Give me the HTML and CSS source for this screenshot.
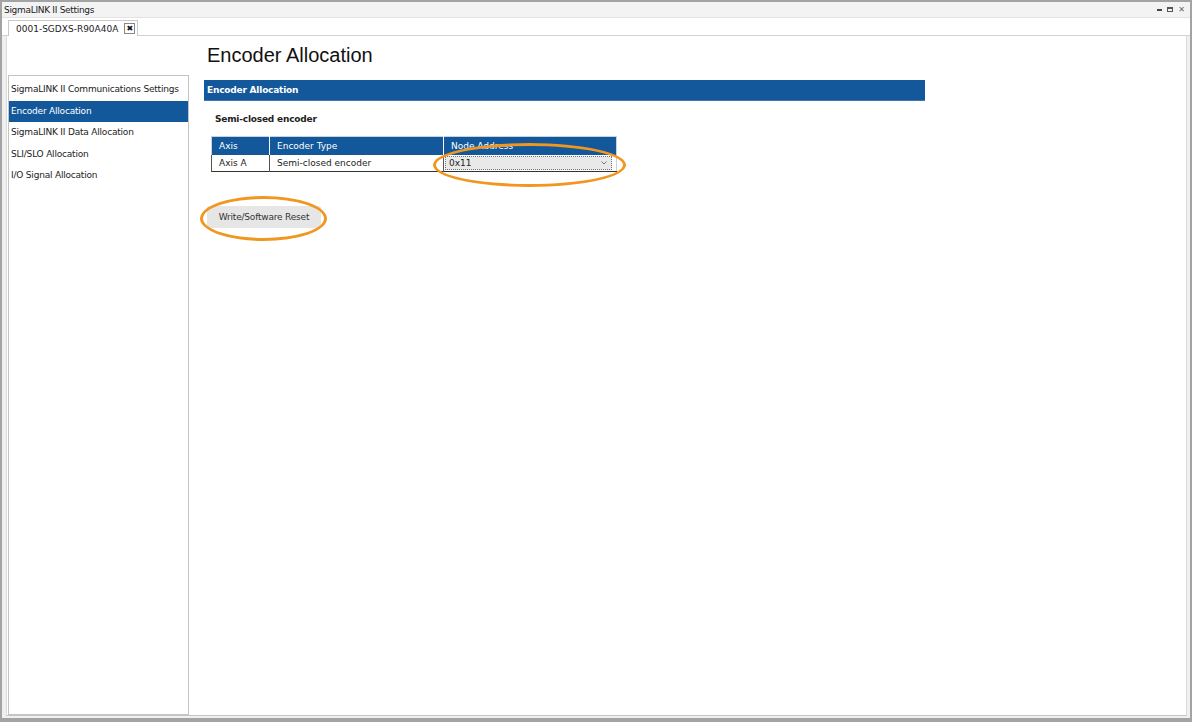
FILE: index.html
```html
<!DOCTYPE html>
<html>
<head>
  <title>SigmaLINK II Settings</title>
  <link rel="stylesheet" href="styles.css">
</head>
<body>
  <div class="window">
    <div class="titlebar">
      <span class="title">SigmaLINK II Settings</span>
      <div class="win-controls">
        <span class="ctl-pin"></span>
        <span class="ctl-max"></span>
        <span class="ctl-close">&#x2715;</span>
      </div>
    </div>
    <div class="tabstrip">
      <div class="tab">
        <span>0001-SGDXS-R90A40A</span>
        <span class="tab-close">&#x2716;</span>
      </div>
    </div>
    <div class="panel">
      <ul class="sidebar">
        <li>SigmaLINK II Communications Settings</li>
        <li class="active">Encoder Allocation</li>
        <li>SigmaLINK II Data Allocation</li>
        <li>SLI/SLO Allocation</li>
        <li>I/O Signal Allocation</li>
      </ul>
      <div class="main">
        <h1>Encoder Allocation</h1>
        <div class="section-bar">Encoder Allocation</div>
        <h4>Semi-closed encoder</h4>
        <table class="enc-table">
          <thead>
            <tr>
              <th class="col-axis">Axis</th>
              <th class="col-type">Encoder Type</th>
              <th class="col-node">Node Address</th>
            </tr>
          </thead>
          <tbody>
            <tr>
              <td>Axis A</td>
              <td>Semi-closed encoder</td>
              <td class="cell-select">
                <div class="select">
                  <span>0x11</span>
                  <svg class="arrow" width="6" height="4" viewBox="0 0 6 4">
                    <path d="M0.5 0.5 L3 3 L5.5 0.5" fill="none" stroke="#777" stroke-width="1"/>
                  </svg>
                </div>
              </td>
            </tr>
          </tbody>
        </table>
        <button class="reset-button">Write/Software Reset</button>
      </div>
    </div>
  </div>

  <div class="mark mark-select"></div>
  <div class="mark mark-button"></div>
</body>
</html>
```

FILE: styles.css
```css
body {
  margin: 0;
  padding: 0;
  position: relative;
  background: #fff;
  font-family: "DejaVu Sans", Verdana, sans-serif;
  font-size: 9px;
  color: #222;
}

.window {
  box-sizing: border-box;
  height: 722px;
  border: 2px solid #a3a3a3;
  border-bottom-width: 4px;
  background: #f0f0f0;
  display: flex;
  flex-direction: column;
}

.titlebar {
  height: 15px;
  display: flex;
  align-items: center;
  justify-content: space-between;
  padding: 0 5px 0 2px;
  border-bottom: 1px solid #e2e2e2;
  background: #f3f3f3;
}

.title {
  font-size: 9px;
  letter-spacing: -0.3px;
}

.win-controls {
  display: flex;
  align-items: center;
  gap: 5px;
  color: #555;
}

.ctl-pin {
  width: 5px;
  height: 2px;
  background: #444;
}

.ctl-max {
  width: 6px;
  height: 5px;
  border: 1px solid #555;
  border-top-width: 2px;
  box-sizing: border-box;
}

.ctl-close {
  font-size: 8px;
  color: #666;
}

.tabstrip {
  height: 17px;
  background: #fff;
  border-bottom: 1px solid #d2d2d2;
  display: flex;
  align-items: flex-end;
  padding-left: 6px;
}

.tab {
  height: 16px;
  width: 130px;
  box-sizing: border-box;
  border: 1px solid #c9c9c9;
  border-bottom: none;
  background: #fff;
  display: flex;
  align-items: center;
  gap: 6px;
  padding-left: 7px;
  font-size: 9px;
  margin-bottom: -1px;
}

.tab-close {
  width: 11px;
  height: 11px;
  box-sizing: border-box;
  border: 1px solid #888;
  font-size: 8px;
  line-height: 9px;
  text-align: center;
  color: #111;
}

.panel {
  flex: 1;
  display: flex;
  background: #fff;
  margin: 0 3px 2px 4px;
  border-left: 1px solid #dcdcdc;
  border-right: 1px solid #dcdcdc;
  border-bottom: 1px solid #c4c4c4;
}

.sidebar {
  list-style: none;
  margin: 39px 0 0 1px;
  padding: 3px 0 0;
  width: 181px;
  box-sizing: border-box;
  border: 1px solid #c4c4c4;
}

.sidebar li {
  height: 21.5px;
  line-height: 21.5px;
  padding-left: 2px;
  white-space: nowrap;
  letter-spacing: -0.2px;
}

.sidebar li.active {
  background: #12589a;
  color: #fff;
}

.main {
  flex: 1;
  padding: 0 0 0 15px;
}

.main h1 {
  margin: 8px 0 0 3px;
  height: 36px;
  line-height: 22px;
  font-family: "Liberation Sans", Arial, sans-serif;
  font-weight: normal;
  font-size: 20px;
  color: #111;
}

.section-bar {
  width: 721px;
  height: 21px;
  line-height: 20px;
  box-sizing: border-box;
  background: #12589a;
  border-bottom: 1px solid #3d79b0;
  color: #fff;
  font-weight: bold;
  padding-left: 3px;
  letter-spacing: -0.2px;
}

.main h4 {
  margin: 13px 0 0 11px;
  height: 22px;
  font-size: 9px;
  font-weight: bold;
  letter-spacing: -0.2px;
}

.enc-table {
  margin-left: 7px;
  border-collapse: collapse;
  border: 1px solid #c5d3e3;
  border-bottom: 1px solid #333;
}

.enc-table th {
  background: #12589a;
  color: #fff;
  font-weight: normal;
  text-align: left;
  height: 18px;
  padding: 0 7px;
  border-left: 1px solid #fff;
  box-sizing: border-box;
}

.enc-table th:first-child {
  border-left: none;
}

.col-axis { width: 58px; }
.col-type { width: 174px; }
.col-node { width: 173px; }

.enc-table td {
  height: 17px;
  padding: 0 7px;
  border-left: 1px solid #555;
  box-sizing: border-box;
}

.enc-table td.cell-select {
  padding: 1px 4px 1px 1px;
}

.select {
  height: 14px;
  box-sizing: border-box;
  border: 1px dotted #777;
  background: #e9e9e9;
  display: flex;
  align-items: center;
  justify-content: space-between;
  padding: 0 4px 0 3px;
}

.reset-button {
  display: block;
  margin: 34px 0 0 3px;
  width: 114px;
  height: 22px;
  border: none;
  border-radius: 2px;
  background: #e6e6e6;
  font-family: "DejaVu Sans", Verdana, sans-serif;
  font-size: 9px;
  letter-spacing: -0.2px;
  color: #333;
  padding: 0;
}

.mark {
  position: absolute;
  box-sizing: border-box;
  border: 3px solid #f1961f;
  border-radius: 50%;
  pointer-events: none;
}

.mark-select {
  left: 433px;
  top: 143px;
  width: 193px;
  height: 44px;
}

.mark-button {
  left: 200px;
  top: 196px;
  width: 127px;
  height: 45px;
}
```
